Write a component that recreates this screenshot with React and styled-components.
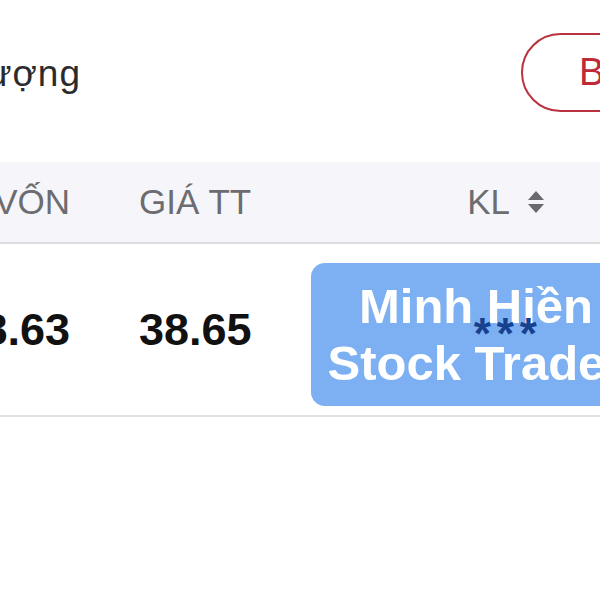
import styled, { createGlobalStyle } from "styled-components";

const GlobalStyle = createGlobalStyle`
  html, body {
    margin: 0;
    padding: 0;
    background: #ffffff;
  }
  body {
    width: 600px;
    height: 600px;
    overflow: hidden;
    font-family: "Liberation Sans", Arial, sans-serif;
  }
`;

const Page = styled.div`
  position: relative;
  width: 720px;
  background: #ffffff;
`;

const TopBar = styled.div`
  height: 162px;
  box-sizing: border-box;
  padding: 0 39px 18px 0;
  display: flex;
  align-items: center;
  justify-content: space-between;
`;

const Title = styled.div`
  width: 81px;
  display: flex;
  justify-content: flex-end;
  white-space: nowrap;
  font-size: 37px;
  line-height: 44px;
  letter-spacing: 1px;
  margin-top: 4px;
  color: #2b2b2e;
`;

const PillButton = styled.button`
  width: 160px;
  height: 79px;
  box-sizing: border-box;
  border: 2px solid #b9323e;
  border-radius: 40px;
  background: #ffffff;
  color: #c02a38;
  font-family: inherit;
  font-size: 38px;
  font-weight: 500;
  text-align: left;
  padding: 0 0 0 56px;
`;

const Row = styled.div`
  display: grid;
  grid-template-columns: 70px 229px 246px 1fr;
  align-items: center;
  height: ${(p) => p.$height}px;
  background: ${(p) => p.$bg || "#ffffff"};
  border-bottom: 2px solid ${(p) => p.$line};
  box-sizing: border-box;
`;

const Cell = styled.div`
  display: flex;
  align-items: center;
  justify-content: ${(p) => (p.$end ? "flex-end" : "flex-start")};
  white-space: nowrap;
  padding-left: ${(p) => p.$indent || 0}px;
`;

const HeadText = styled.span`
  font-size: 35px;
  color: #6c6c71;
`;

const Value = styled.span`
  font-size: 45px;
  font-weight: 700;
  color: #111111;
`;

const Hidden = styled.span`
  position: relative;
  z-index: 2;
  font-size: 44px;
  font-weight: 700;
  letter-spacing: 6px;
  color: #17408f;
  margin-right: 2px;
  margin-top: 8px;
`;

const SortIcon = styled.svg`
  width: 18px;
  height: 24px;
  margin-left: 17px;
`;

const DataArea = styled.div`
  position: relative;
`;

const Watermark = styled.div`
  position: absolute;
  z-index: 1;
  left: 311px;
  top: 19px;
  width: 330px;
  height: 143px;
  border-radius: 14px;
  background: #7cb0f2;
  display: flex;
  flex-direction: column;
  align-items: center;
  justify-content: center;
  color: #ffffff;
  font-size: 49px;
  font-weight: 700;
  line-height: 57px;
  white-space: nowrap;
`;

const Sort = () => (
  <SortIcon viewBox="0 0 18 24">
    <path d="M9 1 L17 10 H1 Z" fill="#6a6a6e" />
    <path d="M9 23 L17 14 H1 Z" fill="#6a6a6e" />
  </SortIcon>
);

export default function App() {
  return (
    <>
      <GlobalStyle />
      <Page>
        <TopBar>
          <Title>Khối lượng</Title>
          <PillButton>Bán</PillButton>
        </TopBar>

        <Row $height={82} $bg="#f6f6fa" $line="#dcdce1">
          <Cell $end>
            <HeadText>GIÁ VỐN</HeadText>
          </Cell>
          <Cell $indent={69}>
            <HeadText>GIÁ TT</HeadText>
          </Cell>
          <Cell $end>
            <HeadText>KL</HeadText>
            <Sort />
          </Cell>
          <Cell />
        </Row>

        <DataArea>
          <Row $height={173} $line="#e2e2e6">
            <Cell $end>
              <Value>38.63</Value>
            </Cell>
            <Cell $indent={69}>
              <Value>38.65</Value>
            </Cell>
            <Cell $end>
              <Hidden>***</Hidden>
            </Cell>
            <Cell />
          </Row>
          <Watermark>
            <span>Minh Hiền</span>
            <span>Stock Trader</span>
          </Watermark>
        </DataArea>
      </Page>
    </>
  );
}
